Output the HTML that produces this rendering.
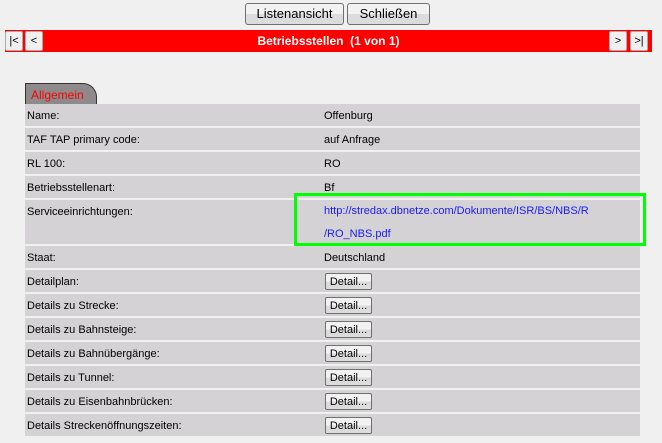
<!DOCTYPE html>
<html><head><style>
body{margin:0;width:662px;height:443px;background:#f0f0f0;font-family:"Liberation Sans",sans-serif;font-size:11px;color:#000;position:relative;overflow:hidden}
.b{position:absolute;box-sizing:border-box;border:1px solid #707070;border-radius:3px;background:linear-gradient(#f2f2f2 50%,#dcdcdc 50%);text-align:center;font-size:13px}
#bar{position:absolute;left:5px;top:30px;width:647px;height:22px;background:#ff0000;color:#fff;font-weight:bold;text-align:center;line-height:22px;font-size:12px}
.nb{position:absolute;top:1px;width:18px;height:20px;box-sizing:border-box;border:1px solid #aaa;border-radius:2px;background:#f0f0f0;color:#000;font-weight:normal;line-height:18px;font-size:11px}
#tab{position:absolute;left:25px;top:83px;width:72px;height:21px;box-sizing:border-box;background:#8e8a8c;border:1px solid #333;border-bottom:none;border-top-right-radius:14px;color:#ff0000;font-size:12px;line-height:22px;padding-left:5px}
.r{position:absolute;left:25px;width:615px;background:#d4d2d4;height:22px}
.l{position:absolute;left:2px;top:6px}
.v{position:absolute;left:299px;top:6px}
.d{position:absolute;left:300px;top:3px;width:47px;height:17px;box-sizing:border-box;border:1px solid #707070;border-radius:2px;background:linear-gradient(#f2f2f2 50%,#dcdcdc 50%);font-size:11px;line-height:16px;text-align:center}
a{color:#1a1aff;text-decoration:none}
</style></head><body>
<div class="b" style="left:245px;top:3px;width:99px;height:22px;line-height:20px">Listenansicht</div>
<div class="b" style="left:347px;top:3px;width:83px;height:22px;line-height:20px">Schließen</div>
<div id="bar">Betriebsstellen&nbsp; (1 von 1)
<div class="nb" style="left:0">|&lt;</div><div class="nb" style="left:20px">&lt;</div>
<div class="nb" style="left:604px">&gt;</div><div class="nb" style="left:625px">&gt;|</div></div>
<div id="tab">Allgemein</div>
<div class="r" style="top:104px"><span class="l">Name:</span><span class="v">Offenburg</span></div>
<div class="r" style="top:128px"><span class="l">TAF TAP primary code:</span><span class="v">auf Anfrage</span></div>
<div class="r" style="top:152px"><span class="l">RL 100:</span><span class="v">RO</span></div>
<div class="r" style="top:176px"><span class="l">Betriebsstellenart:</span><span class="v">Bf</span></div>
<div class="r" style="top:200px;height:44px"><span class="l">Serviceeinrichtungen:</span><span class="v" style="line-height:23px;top:0px"><a>http://stredax.dbnetze.com/Dokumente/ISR/BS/NBS/R<br>/RO_NBS.pdf</a></span></div>
<div class="r" style="top:246px"><span class="l">Staat:</span><span class="v">Deutschland</span></div>
<div class="r" style="top:270px"><span class="l">Detailplan:</span><span class="d">Detail...</span></div>
<div class="r" style="top:294px"><span class="l">Details zu Strecke:</span><span class="d">Detail...</span></div>
<div class="r" style="top:318px"><span class="l">Details zu Bahnsteige:</span><span class="d">Detail...</span></div>
<div class="r" style="top:342px"><span class="l">Details zu Bahnübergänge:</span><span class="d">Detail...</span></div>
<div class="r" style="top:366px"><span class="l">Details zu Tunnel:</span><span class="d">Detail...</span></div>
<div class="r" style="top:390px"><span class="l">Details zu Eisenbahnbrücken:</span><span class="d">Detail...</span></div>
<div class="r" style="top:414px"><span class="l">Details Streckenöffnungszeiten:</span><span class="d">Detail...</span></div>
<div style="position:absolute;left:294px;top:193px;width:346px;height:47px;border:3px solid #00ff00"></div>
</body></html>
